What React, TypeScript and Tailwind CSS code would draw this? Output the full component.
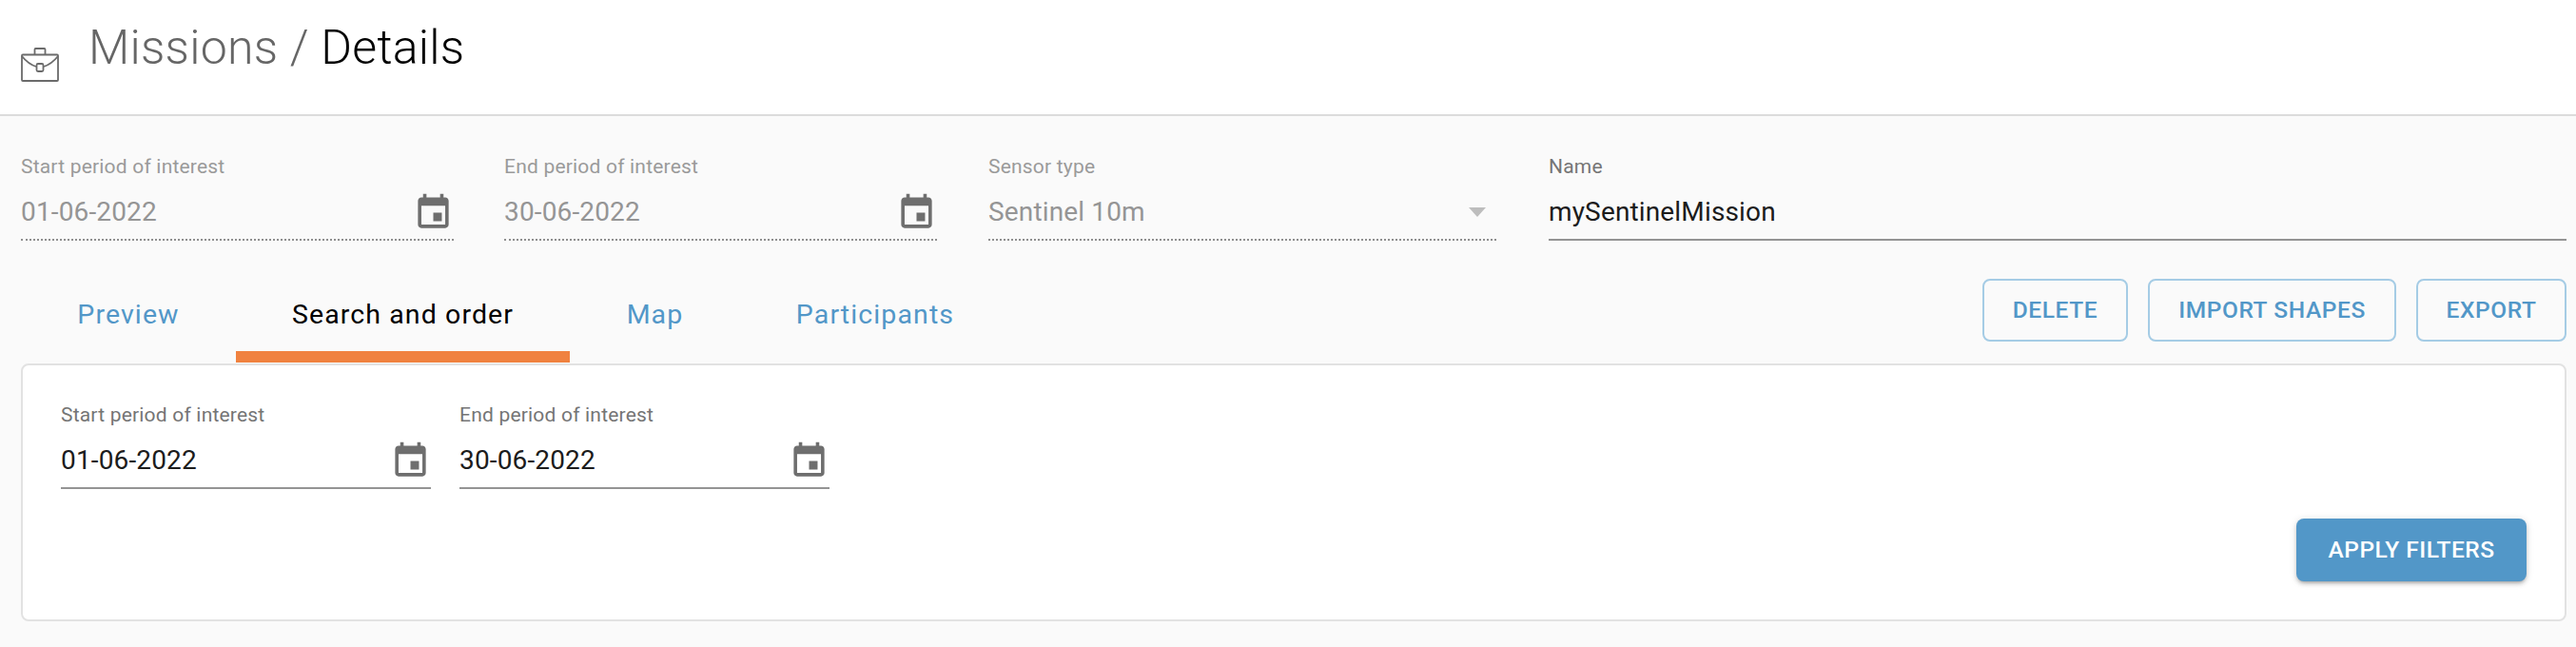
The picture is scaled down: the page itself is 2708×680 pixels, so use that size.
import { ReactNode } from 'react'

const eventPath =
  'M17 12h-5v5h5v-5zM16 1v2H8V1H6v2H5c-1.11 0-1.99.9-1.99 2L3 19c0 1.1.89 2 2 2h14c1.1 0 2-.9 2-2V5c0-1.1-.9-2-2-2h-1V1h-2zm3 18H5V8h14v11z'

function CalendarIcon() {
  return (
    <svg viewBox="0 0 24 24" className="h-[43px] w-[43px] shrink-0 fill-[#6e6e6e]">
      <path d={eventPath} />
    </svg>
  )
}

function BriefcaseIcon() {
  return (
    <svg viewBox="0 0 40 36" className="mt-[50px] h-[36px] w-[40px] shrink-0 fill-none stroke-[#6b6b6b] stroke-[1.8]">
      <rect x="1" y="7.5" width="38" height="27.5" rx="1" />
      <path d="M1 9c4 5 9 9 15 11M39 9c-4 5-9 9-15 11" />
      <rect x="16.5" y="17" width="7" height="8" rx="1.5" />
      <path d="M14.5 7.5V2a1 1 0 0 1 1-1h9a1 1 0 0 1 1 1v5.5" />
    </svg>
  )
}

interface FieldProps {
  label: string
  value: string
  disabled?: boolean
  icon?: ReactNode
  className?: string
}

function Field({ label, value, disabled, icon, className }: FieldProps) {
  return (
    <div className={className}>
      <div className={`text-[21px] leading-[24px] tracking-[0.2px] ${disabled ? 'text-[#9a9a9a]' : 'text-[#757575]'}`}>{label}</div>
      <div
        className={`mt-[13px] flex h-[53px] items-center justify-between pb-[5px] ${
          disabled ? 'border-b-2 border-dotted border-[#8f8f8f] text-[#959595]' : 'border-b-2 border-[#949494] text-[#1c1c1c]'
        }`}
      >
        <span className="text-[28px] leading-[40px] tracking-[0.15px]">{value}</span>
        {icon}
      </div>
    </div>
  )
}

const tabs = [
  { label: 'Preview', width: 'w-[226px]' },
  { label: 'Search and order', width: 'w-[351px]', active: true },
  { label: 'Map', width: 'w-[179px]' },
  { label: 'Participants', width: 'w-[284px]' },
]

function OutlineButton({ children, width }: { children: ReactNode; width: string }) {
  return (
    <button className={`h-[66px] ${width} rounded-lg border-2 border-[#a5cce5] text-[24.5px] font-medium tracking-[0.6px] text-[#5297c8]`}>
      {children}
    </button>
  )
}

export default function App() {
  return (
    <div className="h-[680px] bg-[#fafafa] font-['Roboto',sans-serif]">
      {/* Cabecera */}
      <header className="flex h-[122px] gap-[31px] border-b-2 border-[#dcdcdc] bg-white pl-[22px]">
        <BriefcaseIcon />
        <h1 className="mt-[22px] text-[50px] leading-[56px] font-light tracking-[0.25px] text-[#666666]">
          Missions / <span className="text-black">Details</span>
        </h1>
      </header>

      <div className="pr-[10px] pl-[22px]">
        {/* Campos de la mision */}
        <div className="mt-[41px] flex">
          <Field className="w-[455px]" label="Start period of interest" value="01-06-2022" disabled icon={<CalendarIcon />} />
          <Field className="ml-[53px] w-[455px]" label="End period of interest" value="30-06-2022" disabled icon={<CalendarIcon />} />
          <div className="ml-[54px] w-[534px]">
            <div className="text-[21px] leading-[24px] tracking-[0.2px] text-[#9a9a9a]">Sensor type</div>
            <div className="mt-[13px] flex h-[53px] items-center justify-between border-b-2 border-dotted border-[#8f8f8f] pr-[11px] pb-[5px] text-[#959595]">
              <span className="text-[28px] leading-[40px] tracking-[0.15px]">Sentinel 10m</span>
              <span className="h-0 w-0 border-x-[9px] border-t-[10px] border-x-transparent border-t-[#bdbdbd]" />
            </div>
          </div>
          <div className="ml-[55px] flex-1">
            <div className="text-[21px] leading-[24px] tracking-[0.2px] text-[#757575]">Name</div>
            <div className="mt-[13px] flex h-[53px] items-center border-b-2 border-[#949494] pb-[5px] text-[#1c1c1c]">
              <span className="text-[28px] leading-[40px] tracking-[0.15px]">mySentinelMission</span>
            </div>
          </div>
        </div>

        {/* Pestanas y acciones */}
        <div className="mt-[44px] flex items-start justify-between">
          <div className="flex h-[84px]">
            {tabs.map((tab) => (
              <div
                key={tab.label}
                className={`flex h-[84px] items-center justify-center ${tab.width} text-[28.5px] tracking-[1.1px] ${
                  tab.active ? 'border-b-[12px] border-[#f08240] pb-[4px] text-black' : 'pb-[16px] text-[#5297c8]'
                }`}
              >
                {tab.label}
              </div>
            ))}
          </div>
          <div className="mt-[-4px] flex gap-[21px]">
            <OutlineButton width="w-[153px]">DELETE</OutlineButton>
            <OutlineButton width="w-[261px]">IMPORT SHAPES</OutlineButton>
            <OutlineButton width="w-[158px]">EXPORT</OutlineButton>
          </div>
        </div>

        {/* Filtros */}
        <div className="mt-px h-[271px] rounded-lg border-2 border-[#e2e2e2] bg-white px-[40px] pt-[40px]">
          <div className="flex gap-[30px]">
            <Field className="w-[389px]" label="Start period of interest" value="01-06-2022" icon={<CalendarIcon />} />
            <Field className="w-[389px]" label="End period of interest" value="30-06-2022" icon={<CalendarIcon />} />
          </div>
          <div className="mt-[31px] flex justify-end">
            <button className="h-[66px] w-[242px] rounded-lg bg-[#5297c8] text-[24.5px] font-medium tracking-[0.5px] text-white shadow-[0_3px_3px_-2px_rgba(0,0,0,0.2),0_3px_4px_0_rgba(0,0,0,0.14),0_1px_8px_0_rgba(0,0,0,0.12)]">
              APPLY FILTERS
            </button>
          </div>
        </div>
      </div>
    </div>
  )
}
